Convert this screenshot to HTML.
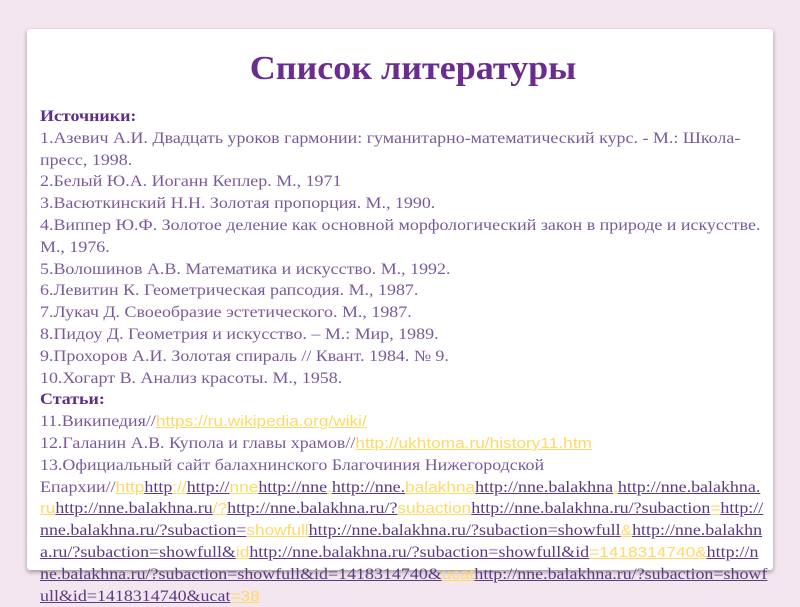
<!DOCTYPE html>
<html><head><meta charset="utf-8"><style>
body{margin:0;width:800px;height:600px;background:#f3e6ee;position:relative;overflow:hidden;font-family:"Liberation Serif",serif;}
.card{position:absolute;left:27px;top:29px;width:746px;height:541px;background:#fff;border-radius:3px;box-shadow:0 2px 5px rgba(0,0,0,0.35);}
h1{position:absolute;left:0;width:826px;top:50px;margin:0;text-align:center;font-size:34px;font-weight:bold;color:#6a2c91;transform:scaleX(1.06);}
.t{position:absolute;left:40px;top:106px;font-size:15.6px;line-height:21.8px;color:#7a5a9a;white-space:nowrap;transform:scaleX(1.15);transform-origin:0 0;}
.b{font-weight:bold;color:#5e2e86;}
.y{font-family:"Liberation Sans",sans-serif;color:#ffd966;text-decoration:underline;font-size:15px;}
.p{color:#5a3a82;text-decoration:underline;}
.l2 .y{letter-spacing:0.3px}
</style></head><body>
<div class="card"></div>
<h1>Список литературы</h1>
<div class="t">
<div class="b">Источники:</div>
<div>1.Азевич А.И. Двадцать уроков гармонии: гуманитарно-математический курс. - М.: Школа-</div>
<div>пресс, 1998.</div>
<div>2.Белый Ю.А. Иоганн Кеплер. М., 1971</div>
<div>3.Васюткинский Н.Н. Золотая пропорция. М., 1990.</div>
<div>4.Виппер Ю.Ф. Золотое деление как основной морфологический закон в природе и искусстве.</div>
<div>М., 1976.</div>
<div>5.Волошинов А.В. Математика и искусство. М., 1992.</div>
<div>6.Левитин К. Геометрическая рапсодия. М., 1987.</div>
<div>7.Лукач Д. Своеобразие эстетического. М., 1987.</div>
<div>8.Пидоу Д. Геометрия и искусство. – М.: Мир, 1989.</div>
<div>9.Прохоров А.И. Золотая спираль // Квант. 1984. № 9.</div>
<div>10.Хогарт В. Анализ красоты. М., 1958.</div>
<div class="b">Статьи:</div>
<div>11.Википедия//<span class="y">https://ru.wikipedia.org/wiki/</span></div>
<div>12.Галанин А.В. Купола и главы храмов//<span class="y">http://ukhtoma.ru/history11.htm</span></div>
<div>13.Официальный сайт балахнинского Благочиния Нижегородской</div>
<div>Епархии//<span class="y">http</span><span class="p">http</span><span class="y">://</span><span class="p">http://</span><span class="y">nne</span><span class="p">http://nne</span><span class="y">.</span><span class="p">http://nne.</span><span class="y">balakhna</span><span class="p">http://nne.balakhna</span><span class="y">.</span><span class="p">http://nne.balakhna.</span></div>
<div><span class="y">ru</span><span class="p">http://nne.balakhna.ru</span><span class="y">/?</span><span class="p">http://nne.balakhna.ru/?</span><span class="y">subaction</span><span class="p">http://nne.balakhna.ru/?subaction</span><span class="y">=</span><span class="p">http://</span></div>
<div><span class="p">nne.balakhna.ru/?subaction=</span><span class="y">showfull</span><span class="p">http://nne.balakhna.ru/?subaction=showfull</span><span class="y">&amp;</span><span class="p">http://nne.balakhn</span></div>
<div><span class="p">a.ru/?subaction=showfull&amp;</span><span class="y">id</span><span class="p">http://nne.balakhna.ru/?subaction=showfull&amp;id</span><span class="y">=1418314740&amp;</span><span class="p">http://n</span></div>
<div><span class="p">ne.balakhna.ru/?subaction=showfull&amp;id=1418314740&amp;</span><span class="y">ucat</span><span class="p">http://nne.balakhna.ru/?subaction=showf</span></div>
<div><span class="p">ull&amp;id=1418314740&amp;ucat</span><span class="y">=38</span></div>
</div>
</body></html>
